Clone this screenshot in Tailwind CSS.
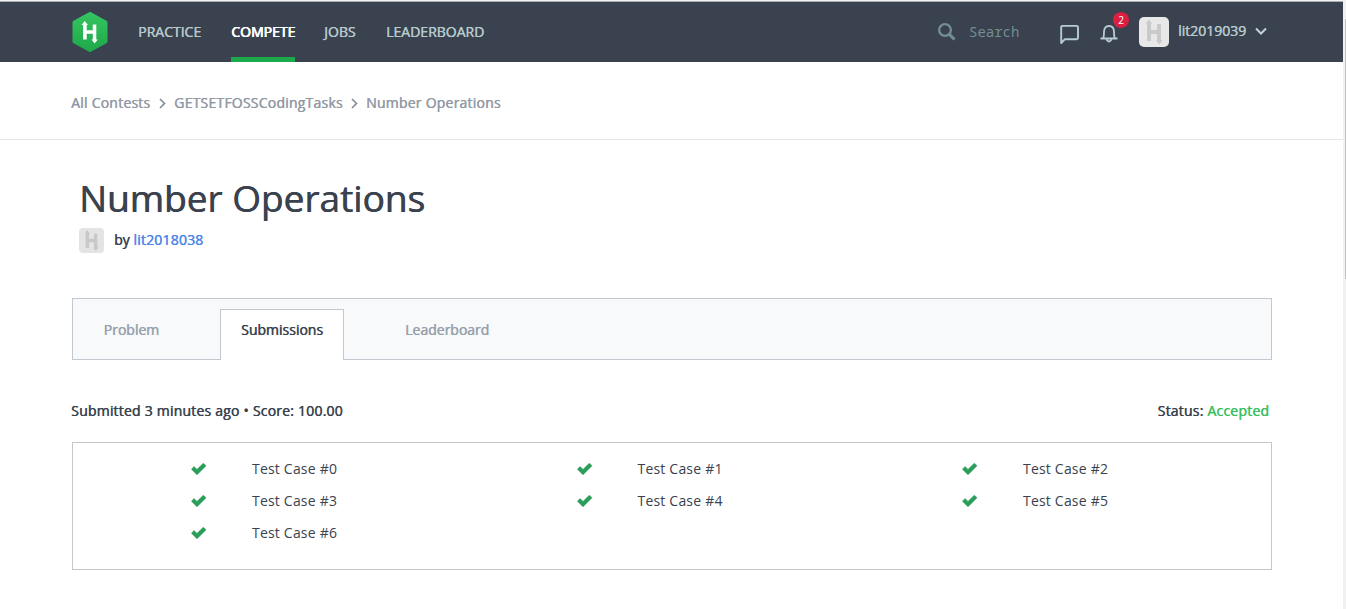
<!DOCTYPE html>
<html lang="en">
<head>
<meta charset="utf-8">
<title>Number Operations</title>
<script src="https://cdn.jsdelivr.net/npm/@tailwindcss/browser@4"></script>
</head>
<body class="h-[609px] w-[1346px] overflow-hidden bg-white font-['Open_Sans',sans-serif] text-[14px] leading-5 text-[#39424e]">
<svg class="hidden">
  <symbol id="mark" viewBox="0 0 30 30"><path d="M7 6.500 10 2.500l3 4H12V13h6V7h4v16h1.500l-3.200 4.500L17 23.500h1V17h-6v7H8V6.500z"/></symbol>
  <symbol id="check" viewBox="0 0 16 12"><path d="M.500 6.200 3 3.600 6 6.400 12.300.2 15 2.700 6 11.800z" stroke-width=".6" stroke-linejoin="round"/></symbol>
</svg>
<div class="flex h-full">
  <div class="w-[1343px] shrink-0">
    <div class="h-px bg-[#f4f4f4]"></div>
    <header class="flex h-[61px] border-t border-[#a9adb2] bg-[#39424e] pl-[71px] text-[#b7c9cc] [text-shadow:0.5px_0_currentColor]">
      <svg class="mt-[9px] h-[42px] w-[38px]" viewBox="0 0 38 42"><defs><linearGradient id="g" x2="0" y2="1"><stop stop-color="#35c45f"/><stop offset="1" stop-color="#1fa94b"/></linearGradient></defs><path d="M19 3 34.500 11.500v19L19 39 3.500 30.500v-19z" fill="url(#g)" stroke="url(#g)" stroke-width="4" stroke-linejoin="round"/><path d="M10.500 14 13.700 10l3.300 4H15.700v5.300h6.100V13.500H25.300V28.500H26.800L23.600 32.500 20.500 28.500h1.300v-5.700h-6.100v5.700h-3.600V14z" fill="#fff"/></svg>
      <nav class="ml-[29px] flex">
        <a class="h-[60px] w-[93px] pt-5">PRACTICE</a>
        <a class="h-[60px] w-16 border-b-5 border-[#1ba94c] pt-5 text-white [text-shadow:0.5px_0_currentColor,0.8px_0_currentColor]">COMPETE</a>
        <a class="ml-[29px] w-[62px] pt-5">JOBS</a>
        <a class="pt-5">LEADERBOARD</a>
      </nav>
      <div class="ml-auto flex w-[406px]">
        <svg class="mt-5 size-5 shrink-0" viewBox="0 0 20 20" fill="none" stroke="#738f93"><circle cx="8" cy="8" r="5.900" stroke-width="2.300"/><path d="m12.500 12.500 5 5" stroke-width="3"/></svg>
        <span class="mt-5 ml-[12px] w-[91px] shrink-0 font-['Noto_Sans_Mono','DejaVu_Sans_Mono',monospace] text-[14px] text-[#738f93] [text-shadow:none]">Search</span>
        <svg class="mt-[22px] size-5 shrink-0" viewBox="0 0 20 20" fill="none" stroke="#b7cdd3" stroke-width="1.900" stroke-linejoin="round"><path d="M1.200 19V3.300Q1.200 1.900 2.600 1.900H16.500Q18 1.900 18 3.300V13.800Q18 15.300 16.500 15.300H4.700z"/></svg>
        <div class="relative ml-5 w-[39px] shrink-0">
          <svg class="mt-[22px] h-[19px] w-[18px]" viewBox="0 0 18 19" fill="none" stroke="#b7cdd3" stroke-width="1.800"><path d="M.5 14.500H17.500M3 14.500Q4 13 4 8Q4 2 9 2T14 8Q14 13 15 14.500M6.500 15.500Q9 19.500 11.500 15.500"/></svg>
          <span class="absolute top-[10px] left-[13px] size-4 rounded-full bg-[#db1f40] text-center text-[10px] leading-4 text-white [text-shadow:none]">2</span>
        </div>
        <svg class="mt-[15px] size-[30px] shrink-0 rounded-[5px] bg-[#e8e8e8] fill-[#cacaca]"><use href="#mark"/></svg>
        <span class="mt-[19px] ml-[9px] w-[77px] shrink-0">lit2019039</span>
        <svg class="mt-[25px] h-[9px] w-[12px] shrink-0" viewBox="0 0 12 9" fill="none" stroke="#c3d3d6" stroke-width="2"><path d="m1 1.500 5 5 5-5"/></svg>
      </div>
    </header>
    <nav class="flex h-[78px] items-center border-b border-[#e2e4e7] pt-[5px] pl-[71px] tracking-[0.22px] text-[#929aa5] [text-shadow:0.5px_0_currentColor]">
      <span class="w-[88px]">All Contests</span>
      <svg class="mr-[8px] h-[11px] w-[7px]" viewBox="0 0 7 11" fill="none" stroke="#858d98" stroke-width="1.700"><path d="m1 1 4.500 4.500L1 10"/></svg>
      <span class="w-[177px]">GETSETFOSSCodingTasks</span>
      <svg class="mr-[8px] h-[11px] w-[7px]" viewBox="0 0 7 11" fill="none" stroke="#858d98" stroke-width="1.700"><path d="m1 1 4.500 4.500L1 10"/></svg>
      <span>Number Operations</span>
    </nav>
    <main class="ml-[72px] w-[1200px]">
      <h1 class="ml-[7px] pt-[33px] text-[37px] leading-[50px] [text-shadow:0.6px_0_currentColor]">Number Operations</h1>
      <div class="ml-[7px] flex h-[29px] items-center pt-[5px] [text-shadow:0.5px_0_currentColor]">
        <svg class="size-[25px] rounded bg-[#e4e4e4] fill-[#c8c8c8]" viewBox="0 0 30 30"><use href="#mark"/></svg>
        <span class="ml-[10px] text-[#39424e]">by <a class="tracking-[0.2px] text-[#4f86e8]">lit2018038</a></span>
      </div>
      <div class="mt-[46px] flex h-[62px] border border-[#c2c7d0] bg-[#f8f9fb] text-[#98a1ab] [text-shadow:0.5px_0_currentColor]">
        <a class="w-[147px] pt-[21px] pl-[30.5px]">Problem</a>
        <a class="mt-[10px] h-[51px] w-[124px] border border-b-0 border-[#c2c7d0] bg-white pt-[10px] pl-5 text-[#39424e]">Submissions</a>
        <a class="ml-[61px] pt-[21px]">Leaderboard</a>
      </div>
      <div class="-ml-px mt-[41px] flex justify-between pr-[3px] tracking-[0.21px] [text-shadow:0.5px_0_currentColor]">
        <span>Submitted 3 minutes ago • Score: 100.00</span>
        <span>Status: <b class="font-normal text-[#39c05f]">Accepted</b></span>
      </div>
      <div class="mt-[21px] grid h-[128px] auto-rows-[32px] grid-cols-[385.500px_385.500px_1fr] border border-[#c2c7c9] pt-[10px] pl-[118px] tracking-[0.2px] text-[#39424e]">
        <div class="flex items-center"><svg class="mr-[45px] h-3 w-4 fill-[#2a9d58] stroke-[#2a9d58]"><use href="#check"/></svg>Test Case #0</div>
        <div class="flex items-center"><svg class="mr-[45px] h-3 w-4 fill-[#2a9d58] stroke-[#2a9d58]"><use href="#check"/></svg>Test Case #1</div>
        <div class="flex items-center"><svg class="mr-[45px] h-3 w-4 fill-[#2a9d58] stroke-[#2a9d58]"><use href="#check"/></svg>Test Case #2</div>
        <div class="flex items-center"><svg class="mr-[45px] h-3 w-4 fill-[#2a9d58] stroke-[#2a9d58]"><use href="#check"/></svg>Test Case #3</div>
        <div class="flex items-center"><svg class="mr-[45px] h-3 w-4 fill-[#2a9d58] stroke-[#2a9d58]"><use href="#check"/></svg>Test Case #4</div>
        <div class="flex items-center"><svg class="mr-[45px] h-3 w-4 fill-[#2a9d58] stroke-[#2a9d58]"><use href="#check"/></svg>Test Case #5</div>
        <div class="flex items-center"><svg class="mr-[45px] h-3 w-4 fill-[#2a9d58] stroke-[#2a9d58]"><use href="#check"/></svg>Test Case #6</div>
      </div>
    </main>
  </div>
  <div class="w-[3px] bg-[#f1f1f1] pt-[19px] pl-[2px]"><div class="h-[260px] bg-[#c1c1c1]"></div></div>
</div>
</body>
</html>
